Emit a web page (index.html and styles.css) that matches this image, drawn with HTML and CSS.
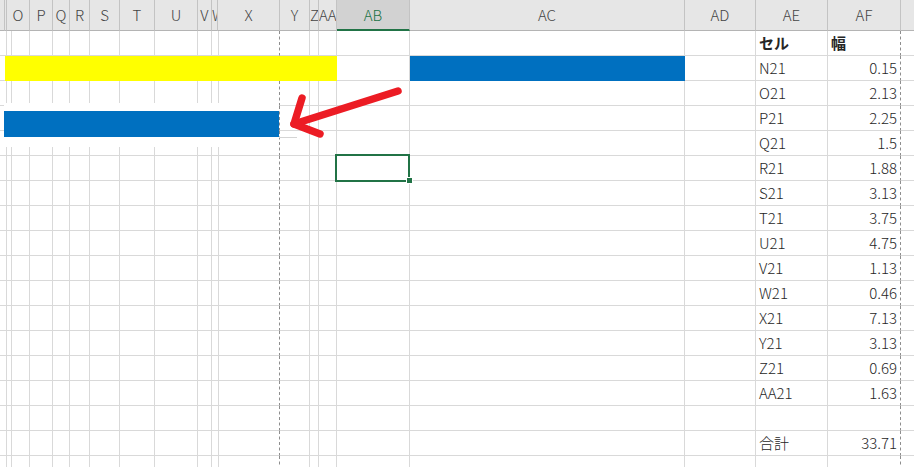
FILE: index.html
```html
<!DOCTYPE html>
<html lang="ja">
<head>
    <meta charset="UTF-8">
    <meta name="viewport" content="width=device-width, initial-scale=1.0">
    <link rel="stylesheet" href="styles.css">
    <title>列幅の合計</title>
</head>
<body>
    <div class="sheet">
        <div class="grid" id="grid"></div>

        <!-- pasted picture of the blue bar -->
        <div class="pasted"><div class="pasted-bar"></div></div>

        <!-- hand drawn arrow -->
        <svg class="arrow" width="914" height="467" viewBox="0 0 914 467">
            <g fill="none" stroke="#ec1c24" stroke-width="7.5" stroke-linecap="round" stroke-linejoin="round">
                <path d="M398 91 L294 124"/>
                <path d="M302 98 L294 124 L320 134"/>
            </g>
        </svg>
    </div>

    <script>
        // columns visible on screen: name, width in px, header label
        const cols = [
            ['M', 5, ''], ['N', 2, ''], ['O', 23], ['P', 23], ['Q', 17], ['R', 20],
            ['S', 30], ['T', 35], ['U', 43], ['V', 14], ['W', 6], ['X', 62],
            ['Y', 30], ['Z', 9], ['AA', 18], ['AB', 73], ['AC', 275], ['AD', 71],
            ['AE', 72], ['AF', 73], ['AG', 72, '']
        ];
        const rowCount = 18;

        const widths = [
            ['N21', '0.15'], ['O21', '2.13'], ['P21', '2.25'], ['Q21', '1.5'],
            ['R21', '1.88'], ['S21', '3.13'], ['T21', '3.75'], ['U21', '4.75'],
            ['V21', '1.13'], ['W21', '0.46'], ['X21', '7.13'], ['Y21', '3.13'],
            ['Z21', '0.69'], ['AA21', '1.63']
        ];

        // cell contents keyed by "COL:ROW"
        const cells = {};
        cells['AE:1'] = { text: 'セル', cls: 'bold' };
        cells['AF:1'] = { text: '幅', cls: 'bold' };
        let total = 0;
        widths.forEach((w, i) => {
            cells['AE:' + (i + 2)] = { text: w[0] };
            cells['AF:' + (i + 2)] = { text: w[1], cls: 'num' };
            total += parseFloat(w[1]);
        });
        cells['AE:17'] = { text: '合計' };
        cells['AF:17'] = { text: total.toFixed(2), cls: 'num' };

        // bar fills on row 2
        const yellowCols = ['N', 'O', 'P', 'Q', 'R', 'S', 'T', 'U', 'V', 'W', 'X', 'Y', 'Z', 'AA'];
        yellowCols.forEach(c => {
            cells[c + ':2'] = { cls: 'fill-yellow' };
        });
        cells['AC:2'] = { cls: 'fill-blue' };
        cells['AB:6'] = { cls: 'active' };

        const grid = document.getElementById('grid');
        grid.style.gridTemplateColumns = cols.map(c => c[1] + 'px').join(' ');

        cols.forEach(c => {
            const head = document.createElement('div');
            head.className = 'cell head';
            if (c[0] === 'AB') head.classList.add('head-active');
            head.textContent = c.length > 2 ? c[2] : c[0];
            grid.appendChild(head);
        });

        for (let r = 1; r <= rowCount; r++) {
            cols.forEach(c => {
                const div = document.createElement('div');
                div.className = 'cell';
                if (c[0] === 'X' || c[0] === 'AF') div.classList.add('break');
                if (c[0] === 'AG') div.classList.add('edge');
                const data = cells[c[0] + ':' + r];
                if (data) {
                    if (data.text) div.textContent = data.text;
                    if (data.cls) div.classList.add(data.cls);
                }
                grid.appendChild(div);
            });
        }
    </script>
</body>
</html>
```

FILE: styles.css
```css
body {
    margin: 0;
    background-color: #fff;
    overflow: hidden;
    font-family: "Noto Sans CJK JP", "Noto Sans", sans-serif;
}

.sheet {
    position: relative;
    width: 914px;
    height: 467px;
    overflow: hidden;
}

.grid {
    display: grid;
    grid-template-rows: 31px;
    grid-auto-rows: 25px;
}

.cell {
    box-sizing: border-box;
    border-right: 1px solid #d9d9d9;
    border-bottom: 1px solid #d9d9d9;
    font-size: 15px;
    font-weight: 300;
    line-height: 24px;
    color: #262626;
    padding: 0 3px;
    white-space: nowrap;
    overflow: hidden;
}

.head {
    background-color: #e6e6e6;
    border-right-color: #c3c3c3;
    border-bottom-color: #b4b4b4;
    color: #444;
    text-align: center;
    line-height: 30px;
    padding: 0;
}

.head-active {
    background-color: #d2d2d2;
    color: #217346;
    border-bottom: 2px solid #217346;
}

.break {
    border-right: 1px dashed #8e8e8e;
}

.edge {
    border-right: none;
}

.bold {
    font-weight: bold;
}

.num {
    text-align: right;
}

.fill-yellow {
    background-color: #ffff00;
    border-color: #ffff00;
}

.fill-blue {
    background-color: #0070c0;
    border-color: #0070c0;
}

.active {
    position: relative;
    overflow: visible;
}

.active::before {
    content: "";
    position: absolute;
    left: -2px;
    top: -2px;
    right: -1px;
    bottom: -2px;
    border: 2px solid #217346;
}

.active::after {
    content: "";
    position: absolute;
    right: -4px;
    bottom: -4px;
    width: 5px;
    height: 5px;
    background-color: #217346;
    border: 1px solid #fff;
}

.pasted {
    position: absolute;
    left: 4px;
    top: 103px;
    width: 275px;
    height: 44px;
    background-color: #fff;
}

.pasted-bar {
    position: relative;
    margin-top: 8px;
    height: 26px;
    background-color: #0070c0;
}

.pasted-bar::after {
    content: "";
    position: absolute;
    left: 100%;
    bottom: -1px;
    width: 18px;
    height: 1px;
    background-color: #d4d4d4;
}

.arrow {
    position: absolute;
    left: 0;
    top: 0;
    pointer-events: none;
}
```
